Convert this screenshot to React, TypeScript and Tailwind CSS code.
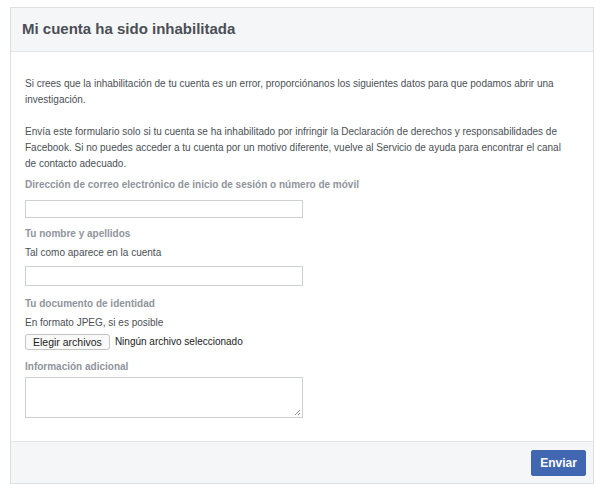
const fields = {
  email: "Dirección de correo electrónico de inicio de sesión o número de móvil",
};

export default function App() {
  return (
    <div
      className="min-h-[493px] w-[600px] bg-white pt-[7px] pl-[10px]"
      style={{ fontFamily: '"Liberation Sans", Arial, sans-serif' }}
    >
      <div className="w-[584px] border border-[#dddfe2] bg-white">
        <div className="flex h-[44px] items-center border-b border-[#e5e5e5] bg-[#f5f6f7] px-[11px]">
          <h1 className="text-[15px] font-bold text-[#4b4f56]">Mi cuenta ha sido inhabilitada</h1>
        </div>

        <div className="pt-[24px] pr-[22px] pb-[23px] pl-[14px] text-[10px] leading-[16px] text-[#4b4f56]">
          <p>
            Si crees que la inhabilitación de tu cuenta es un error, proporciónanos los siguientes datos para que
            podamos abrir una investigación.
          </p>
          <p className="mt-[16px]">
            Envía este formulario solo si tu cuenta se ha inhabilitado por infringir la Declaración de derechos y
            responsabilidades de Facebook. Si no puedes acceder a tu cuenta por un motivo diferente, vuelve al
            Servicio de ayuda para encontrar el canal de contacto adecuado.
          </p>

          <p className="mt-[5px] font-bold text-[#90949c]">{fields.email}</p>
          <div className="mt-[7px] h-[18px] w-[278px] border border-[#ccd0d5] bg-white" />

          <p className="mt-[8px] font-bold text-[#90949c]">Tu nombre y apellidos</p>
          <p className="mt-[3px]">Tal como aparece en la cuenta</p>
          <div className="mt-[5px] h-[20px] w-[278px] border border-[#ccd0d5] bg-white" />

          <p className="mt-[10px] font-bold text-[#90949c]">Tu documento de identidad</p>
          <p className="mt-[3px]">En formato JPEG, si es posible</p>
          <div className="mt-[3px] flex items-center gap-[5px]">
            <span className="flex h-[16px] items-center rounded-[3px] border border-[#c4c4c4] bg-[#fafafa] px-[7px] text-[10.5px] text-[#222]">
              Elegir archivos
            </span>
            <span className="text-[#222]">Ningún archivo seleccionado</span>
          </div>

          <p className="mt-[9px] font-bold text-[#90949c]">Información adicional</p>
          <div className="relative mt-[2px] h-[41px] w-[278px] border border-[#ccd0d5] bg-white">
            <svg className="absolute right-[1px] bottom-[1px]" width="7" height="7" viewBox="0 0 7 7">
              <path d="M6 1L1 6M6 4L4 6" stroke="#888" strokeWidth="1" />
            </svg>
          </div>
        </div>

        <div className="flex h-[42px] items-center justify-end border-t border-[#e5e5e5] bg-[#f5f6f7] px-[7px]">
          <button className="h-[26px] w-[55px] rounded-[2px] border border-[#4267b2] bg-[#4267b2] text-[12px] font-bold text-white">
            Enviar
          </button>
        </div>
      </div>
    </div>
  );
}
